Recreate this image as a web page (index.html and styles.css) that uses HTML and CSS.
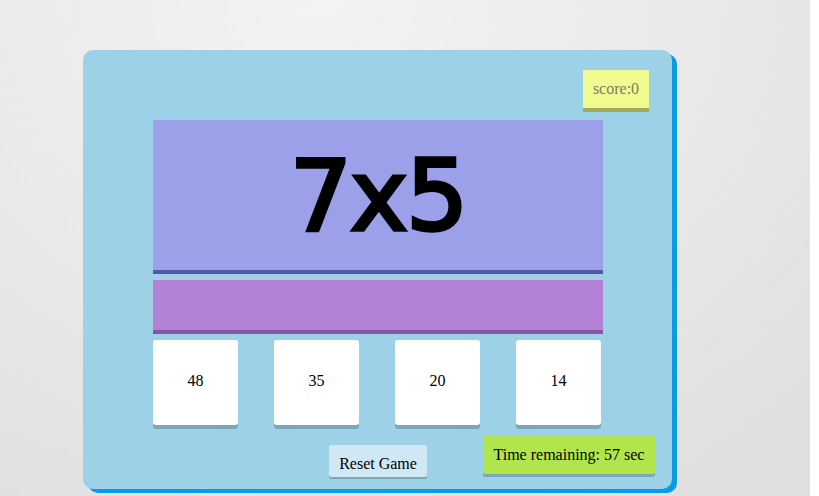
FILE: index.html
```html
<!DOCTYPE html>
<html>
<head>
<meta charset="utf-8">
<link rel="stylesheet" href="styles.css">
</head>
<body>
<div class="page">
  <div class="card">
    <div class="score-row"><div class="score">score:0</div></div>
    <div class="question">7x5</div>
    <div class="answer"></div>
    <div class="choices">
      <div class="choice">48</div>
      <div class="choice">35</div>
      <div class="choice">20</div>
      <div class="choice">14</div>
    </div>
    <div class="bottom">
      <div class="reset">Reset Game</div>
      <div class="time">Time remaining: 57 sec</div>
    </div>
  </div>
</div>
</body>
</html>
```
FILE: styles.css
```css
html, body {
  margin: 0;
  padding: 0;
  background: #fff;
  font-family: "Liberation Serif", "Times New Roman", serif;
  font-size: 16px;
}
.page {
  width: 810px;
  height: 496px;
  overflow: hidden;
  background: radial-gradient(ellipse 700px 600px at 320px 0px, #f3f3f3 0%, #e9e9e9 55%, #dfdfdf 100%);
  padding-top: 50px;
  box-sizing: border-box;
}
.card {
  margin-left: 83px;
  width: 589px;
  height: 439px;
  background: #9dd1e8;
  border-radius: 10px;
  box-shadow: 5px 4px 0 #0a9be0;
  padding: 20px 0 0 70px;
  box-sizing: border-box;
}
.score-row {
  display: flex;
  justify-content: flex-end;
  padding-right: 23px;
}
.score {
  width: 66px;
  height: 38px;
  background: #f0fa8e;
  box-shadow: 0 4px 0 #a1aa58;
  color: #7b7b6c;
  display: flex;
  align-items: center;
  justify-content: center;
}
.question {
  margin-top: 12px;
  width: 450px;
  height: 150px;
  background: #9ca0e8;
  box-shadow: 0 4px 0 #5059a8;
  display: flex;
  align-items: center;
  justify-content: center;
  font-family: "DejaVu Sans", sans-serif;
  font-size: 98px;
  color: #000;
  -webkit-text-stroke: 3.5px #000;
  paint-order: stroke fill;
  letter-spacing: -2px;
  padding-top: 2px;
  box-sizing: border-box;
}
.answer {
  margin-top: 10px;
  width: 450px;
  height: 50px;
  background: #b381d6;
  box-shadow: 0 4px 0 #8457a8;
}
.choices {
  margin-top: 10px;
  display: flex;
  gap: 36px;
}
.choice {
  width: 85px;
  height: 85px;
  background: #fff;
  border-radius: 3px;
  box-shadow: 0 4px 0 #7ea6bb;
  display: flex;
  align-items: center;
  justify-content: center;
  padding-bottom: 4px;
  box-sizing: border-box;
}
.bottom {
  margin-top: 11px;
  display: flex;
  align-items: flex-start;
}
.reset {
  flex-shrink: 0;
  margin-top: 9px;
  margin-left: 176px;
  width: 98px;
  height: 32px;
  background: #d0e8f4;
  border-radius: 2px;
  box-shadow: 0 2px 0 #7ea6bb;
  box-sizing: border-box;
  padding-top: 9px;
  text-align: center;
  line-height: 20px;
}
.time {
  flex-shrink: 0;
  margin-left: 56px;
  width: 172px;
  height: 38px;
  background: #b0e64c;
  border-radius: 2px;
  box-shadow: 0 3px 0 #7ea6bb;
  display: flex;
  align-items: center;
  justify-content: center;
}
```
